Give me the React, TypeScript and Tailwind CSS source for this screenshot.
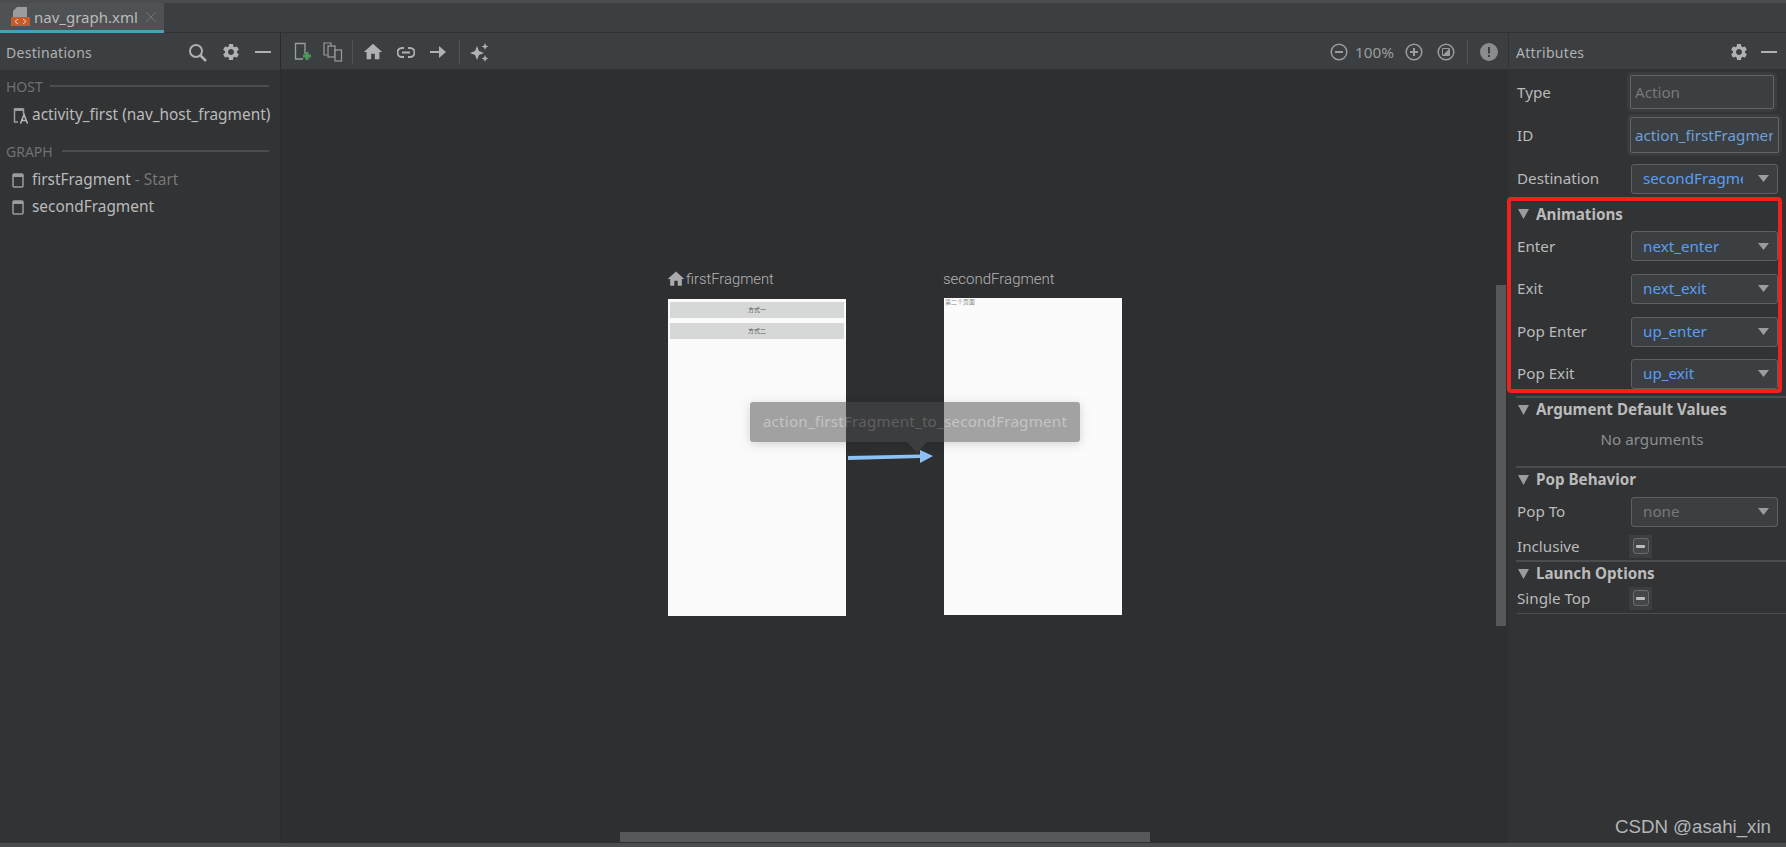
import { MdHome, MdSettings } from "react-icons/md";

const UI_FONT = "font-['Noto_Sans','Noto_Sans_CJK_SC',sans-serif]";

function Minus() {
  return <span className="block h-[2px] w-[16px] bg-[#afb1b3]" />;
}

function Caret({ className = "" }: { className?: string }) {
  return (
    <svg width="11" height="7" viewBox="0 0 11 7" className={className}>
      <path d="M0 0h11L5.500 7z" fill="#9a9c9e" />
    </svg>
  );
}

function PhoneIcon() {
  return (
    <svg width="12" height="15" viewBox="0 0 12 15" fill="none">
      <rect x="1" y="1" width="10" height="13" rx="1" stroke="#9a9c9e" strokeWidth="1.500" />
      <rect x="1" y="1" width="10" height="3" fill="#9a9c9e" />
    </svg>
  );
}

function SectionLabel({ text, lineWidth }: { text: string; lineWidth: string }) {
  return (
    <div className="flex h-[20px] items-center pl-[6px] pr-[11px]">
      <span className="text-[14px] text-[#6f7173]">{text}</span>
      <span className={`ml-auto h-[2px] bg-[#4b4d4f] ${lineWidth}`} />
    </div>
  );
}

function Destinations() {
  return (
    <aside className="flex w-[280px] flex-col bg-[#313335]">
      <div className="flex h-[37px] items-center bg-[#3c3f41] pl-[6px] pr-[9px] pt-[1px]">
        <span className="text-[14px] tracking-[0.3px] text-[#afb1b3]">Destinations</span>
        <svg width="19" height="19" viewBox="0 0 19 19" fill="none" className="ml-auto mr-[14px]">
          <circle cx="8" cy="8" r="6" stroke="#afb1b3" strokeWidth="2" />
          <path d="M12.500 12.500 18 18" stroke="#afb1b3" strokeWidth="2.500" />
        </svg>
        <MdSettings size={20} color="#afb1b3" className="mr-[14px]" />
        <Minus />
      </div>
      <div className="mt-[6px]">
        <SectionLabel text="HOST" lineWidth="w-[219px]" />
      </div>
      <div className="mt-[7px] flex h-[24px] items-center pl-[13px] text-[15.4px] text-[#bbbbbb]">
        <svg width="16" height="17" viewBox="0 0 16 17" fill="none" className="mr-[3px]">
          <path d="M5 15H1.500V2h9v5" stroke="#9a9c9e" strokeWidth="1.500" />
          <rect x="1.500" y="1" width="9" height="3" fill="#9a9c9e" />
          <path d="M7.500 16.500l3.500-9 3.500 9M8.800 13.500h4.400" stroke="#bbbbbb" strokeWidth="1.500" />
        </svg>
        <span>activity_first (nav_host_fragment)</span>
      </div>
      <div className="mt-[14px]">
        <SectionLabel text="GRAPH" lineWidth="w-[207px]" />
      </div>
      <div className="mt-[7px] flex h-[24px] items-center gap-[8px] pl-[12px] text-[15.4px] text-[#bbbbbb]">
        <PhoneIcon />
        <span>
          firstFragment <span className="text-[#787878]">- Start</span>
        </span>
      </div>
      <div className="mt-[3px] flex h-[24px] items-center gap-[8px] pl-[12px] text-[15.4px] text-[#bbbbbb]">
        <PhoneIcon />
        <span>secondFragment</span>
      </div>
    </aside>
  );
}

function Toolbar() {
  return (
    <div className="flex h-[37px] items-center border-b border-[#323232] bg-[#3c3f41] pl-[13px] pr-[10px] pt-[2px]">
      <svg width="18" height="21" viewBox="0 0 18 21" fill="none">
        <path d="M9 17H1.500V1.500h9.500V12" stroke="#9a9c9e" strokeWidth="1.300" />
        <path d="M13 10v8M9 14h8" stroke="#499c54" strokeWidth="3" />
      </svg>
      <svg width="20" height="20" viewBox="0 0 20 20" fill="none" className="ml-[11px]">
        <path d="M4 13H1V1h7v3" stroke="#9a9c9e" strokeWidth="1.200" />
        <rect x="5" y="4" width="7" height="11" stroke="#9a9c9e" strokeWidth="1.200" />
        <rect x="12" y="8" width="6.500" height="11" fill="#3c3f41" stroke="#9a9c9e" strokeWidth="1.200" />
      </svg>
      <span className="ml-[9px] h-[24px] w-px bg-[#515355]" />
      <MdHome size={22} color="#afb1b3" className="ml-[9px]" />
      <svg width="18" height="11" viewBox="0 0 18 11" fill="none" className="ml-[13px]">
        <path d="M7 1H5a4.500 4.500 0 0 0 0 9h2M11 1h2a4.500 4.500 0 0 1 0 9h-2M5 5.500h8" stroke="#afb1b3" strokeWidth="2" />
      </svg>
      <svg width="16" height="12" viewBox="0 0 16 12" className="ml-[15px]">
        <path d="M0 5h9V0l7 6-7 6V7H0z" fill="#afb1b3" />
      </svg>
      <span className="ml-[13px] h-[24px] w-px bg-[#515355]" />
      <svg width="20" height="20" viewBox="0 0 20 20" fill="#afb1b3" className="ml-[10px]">
        <path d="M7 4l2 5 5 2-5 2-2 5-2-5-5-2 5-2zM15 1l1 2.500 2.500 1-2.500 1-1 2.500-1-2.500-2.500-1 2.500-1zM15 13l1 2.500 2.500 1-2.500 1-1 2.500-1-2.500-2.500-1 2.500-1z" />
      </svg>
      <div className="ml-auto flex items-center">
        <svg width="18" height="18" viewBox="0 0 18 18" fill="none">
          <circle cx="9" cy="9" r="7.800" stroke="#9a9c9e" strokeWidth="1.500" />
          <path d="M5 9h8" stroke="#9a9c9e" strokeWidth="2" />
        </svg>
        <span className="ml-[7px] text-[15.3px] text-[#9a9c9e]">100%</span>
        <svg width="18" height="18" viewBox="0 0 18 18" fill="none" className="ml-[11px]">
          <circle cx="9" cy="9" r="7.800" stroke="#9a9c9e" strokeWidth="1.500" />
          <path d="M5 9h8M9 5v8" stroke="#9a9c9e" strokeWidth="2" />
        </svg>
        <svg width="18" height="18" viewBox="0 0 18 18" fill="none" className="ml-[14px]">
          <circle cx="9" cy="9" r="7.800" stroke="#9a9c9e" strokeWidth="1.500" />
          <path d="M5.500 5.500h7v7h-7z" stroke="#9a9c9e" strokeWidth="1" />
          <path d="M5.500 12.500l7-7v7z" fill="#9a9c9e" />
        </svg>
        <span className="mx-[12px] h-[24px] w-px bg-[#515355]" />
        <svg width="18" height="18" viewBox="0 0 18 18">
          <circle cx="9" cy="9" r="9" fill="#8a8c8e" />
          <path d="M8 4h2v6.500H8zM8 12h2v2H8z" fill="#3c3f41" />
        </svg>
      </div>
    </div>
  );
}

function Canvas() {
  return (
    <div className="relative flex-1 overflow-hidden bg-[#2e2f31]">
      {/* nodes sit on a free canvas, offsets are relative to x 281 y 70 */}
      <div className="absolute left-[385px] top-[198px] flex items-center text-[14.8px] text-[#b4b4b4]">
        <MdHome size={20} color="#a9abad" />
        <span className="font-['Roboto',sans-serif] font-light">firstFragment</span>
      </div>
      <div className="absolute left-[387px] top-[229px] h-[317px] w-[178px] bg-[#fafafa] px-[2px] pt-[3px]">
        <div className="flex h-[16px] items-center justify-center bg-[#d6d7d7] text-[6px] text-[#555555]">方式一</div>
        <div className="mt-[5px] flex h-[16px] items-center justify-center bg-[#d6d7d7] text-[6px] text-[#555555]">方式二</div>
      </div>

      <span className="absolute left-[662px] top-[198px] font-['Roboto',sans-serif] text-[15px] font-light text-[#b4b4b4]">
        secondFragment
      </span>
      <div className="absolute left-[663px] top-[228px] h-[317px] w-[178px] bg-[#fbfbfb] pl-[1px] text-[6px] leading-[8px] text-[#888888]">
        第二个页面
      </div>

      <svg width="100" height="24" viewBox="0 0 100 24" className="absolute left-[565px] top-[375px]">
        <path d="M2 11 L74 9.500 L74 5 L87 11 L74 18 L74 13 L2 15 z" fill="#8cc2f5" />
      </svg>

      <div className="absolute left-[469px] top-[332px] flex h-[40px] w-[330px] items-center justify-center rounded-[3px] bg-[#4b4b4b] pb-[2px] text-[15.2px] tracking-[0.2px] text-[#8f8f8f] opacity-50 shadow-[0_2px_10px_rgba(0,0,0,0.3)]">
        action_firstFragment_to_secondFragment
      </div>
      <svg width="20" height="11" viewBox="0 0 20 11" className="absolute left-[626px] top-[372px]">
        <path d="M0 0h20L10 11z" fill="#3c3d3e" />
      </svg>

      {/* scrollbars */}
      <div className="absolute bottom-px left-[339px] h-[10px] w-[530px] bg-[#56585a]" />
      <div className="absolute right-[2px] top-[215px] h-[341px] w-[10px] bg-[#56585a]" />
    </div>
  );
}

function Field({ text, width, height, muted = false }: { text: string; width: string; height: string; muted?: boolean }) {
  return (
    <div
      className={`-ml-px flex items-center rounded-[2px] border border-[#646464] bg-[#3c3f41] pl-[4px] text-[15.2px] ring-[3px] ring-[#3a3d3f] ${width} ${height} ${
        muted ? "text-[#787878]" : "text-[#6e9fd8]"
      }`}
    >
      <span className="block w-[138px] overflow-hidden whitespace-nowrap">{text}</span>
    </div>
  );
}

function Dropdown({ text, clipped = false, muted = false }: { text: string; clipped?: boolean; muted?: boolean }) {
  return (
    <div className="flex h-[30px] w-[147px] items-center rounded-[3px] border border-[#5e6060] bg-[#3c3f41] pl-[11px] pr-[8px] text-[15.2px]">
      <span className={`overflow-hidden whitespace-nowrap ${clipped ? "w-[100px]" : ""} ${muted ? "text-[#787878]" : "text-[#589df6]"}`}>
        {text}
      </span>
      <Caret className="ml-auto" />
    </div>
  );
}

function Row({ label, height, children }: { label: string; height: string; children: React.ReactNode }) {
  return (
    <div className={`flex items-center pl-[8px] ${height}`}>
      <span className="w-[114px] text-[15.2px] text-[#bbbbbb]">{label}</span>
      {children}
    </div>
  );
}

function SectionHeader({ title, height }: { title: string; height: string }) {
  return (
    <div className={`flex items-center gap-[7px] pl-[9px] ${height}`}>
      <svg width="11" height="10" viewBox="0 0 11 10">
        <path d="M0 0h11L5.500 10z" fill="#9a9c9e" />
      </svg>
      <span className="text-[15.2px] font-bold text-[#bbbbbb]">{title}</span>
    </div>
  );
}

function Tristate() {
  return (
    <span className="-ml-[2px] flex h-[23px] w-[23px] items-center justify-center bg-[#3c3f41]">
      <span className="flex h-[16px] w-[16px] items-center justify-center rounded-[3px] border border-[#6b6b6b] bg-[#43474a]">
        <span className="h-[3px] w-[9px] rounded-[1px] bg-[#bbbbbb]" />
      </span>
    </span>
  );
}

const SECTION_RULE = "border-t-2 [border-image:linear-gradient(to_right,transparent_8px,#4b4d4f_8px)_1]";

function Attributes() {
  return (
    <aside className="relative flex w-[278px] flex-col border-l border-[#323232] bg-[#313335]">
      <div className="flex h-[37px] items-center border-b border-[#323232] bg-[#3c3f41] pl-[7px] pr-[9px] pt-[2px]">
        <span className="text-[14px] tracking-[0.3px] text-[#afb1b3]">Attributes</span>
        <MdSettings size={20} color="#afb1b3" className="ml-auto mr-[12px]" />
        <Minus />
      </div>
      <div className="h-px" />
      <Row label="Type" height="h-[42px]">
        <Field text="Action" muted width="w-[144px]" height="h-[34px]" />
      </Row>
      <Row label="ID" height="h-[44px]">
        <Field text="action_firstFragment_to_secondFragment" width="w-[149px]" height="h-[36px]" />
      </Row>
      <Row label="Destination" height="h-[43px]">
        <Dropdown text="secondFragment" clipped />
      </Row>

      <SectionHeader title="Animations" height="h-[25px] pt-[3px]" />
      <Row label="Enter" height="h-[42px]">
        <Dropdown text="next_enter" />
      </Row>
      <Row label="Exit" height="h-[43px]">
        <Dropdown text="next_exit" />
      </Row>
      <Row label="Pop Enter" height="h-[43px]">
        <Dropdown text="up_enter" />
      </Row>
      <Row label="Pop Exit" height="h-[41px]">
        <Dropdown text="up_exit" />
      </Row>

      <div className={`mt-[2px] ${SECTION_RULE}`}>
        <SectionHeader title="Argument Default Values" height="h-[23px]" />
        <div className="flex h-[45px] items-start justify-center pl-[9px] pt-[7px] text-[15.2px] text-[#8c8e90]">No arguments</div>
      </div>

      <div className={SECTION_RULE}>
        <SectionHeader title="Pop Behavior" height="h-[23px]" />
        <Row label="Pop To" height="h-[41px]">
          <Dropdown text="none" muted />
        </Row>
        <Row label="Inclusive" height="h-[28px]">
          <Tristate />
        </Row>
      </div>

      <div className={SECTION_RULE}>
        <SectionHeader title="Launch Options" height="h-[23px]" />
        <Row label="Single Top" height="h-[26px]">
          <Tristate />
        </Row>
      </div>
      <div className="ml-[8px] mt-[2px] border-t border-[#4b4d4f]" />

      {/* red annotation box drawn on the screenshot */}
      <div className="absolute left-[-2px] top-[164px] h-[196px] w-[275px] rounded-[4px] border-[4px] border-[#f0201c]" />
    </aside>
  );
}

export default function App() {
  return (
    <div className={`relative flex h-[847px] w-[1786px] flex-col overflow-hidden bg-[#3c3f41] ${UI_FONT}`}>
      <div className="h-[3px] bg-[#4b4d4f]" />
      <div className="flex h-[30px] border-b border-[#323232]">
        <div className="flex h-[30px] w-[164px] items-center border-b-[3px] border-[#4a9fb8] bg-[#4e5254] pl-[11px] pt-[1px]">
          <svg width="20" height="20" viewBox="0 0 20 20">
            <path d="M6 0h10v10H2V4z" fill="#9a9c9e" />
            <rect x="0" y="10" width="19" height="9" fill="#c75b2a" />
            <path d="M7 12l-3 2.500L7 17M12 12l3 2.500L12 17" fill="none" stroke="#f0d8c8" strokeWidth="1" />
          </svg>
          <span className="ml-[3px] text-[15px] text-[#bbbbbb]">nav_graph.xml</span>
          <svg width="10" height="10" viewBox="0 0 10 10" className="ml-[8px]">
            <path d="M0 0l10 10M10 0L0 10" stroke="#6f7173" strokeWidth="1" />
          </svg>
        </div>
      </div>
      <div className="flex min-h-0 flex-1">
        <Destinations />
        <div className="w-px bg-[#2b2b2b]" />
        <div className="flex min-w-0 flex-1 flex-col">
          <Toolbar />
          <Canvas />
        </div>
        <Attributes />
      </div>
      <div className="h-[4px] bg-[#4a4d4f]" />
      <span className="absolute bottom-[6px] right-[15px] font-['Liberation_Sans',sans-serif] text-[18.7px] text-[#b4b6b8]">CSDN @asahi_xin</span>
    </div>
  );
}
